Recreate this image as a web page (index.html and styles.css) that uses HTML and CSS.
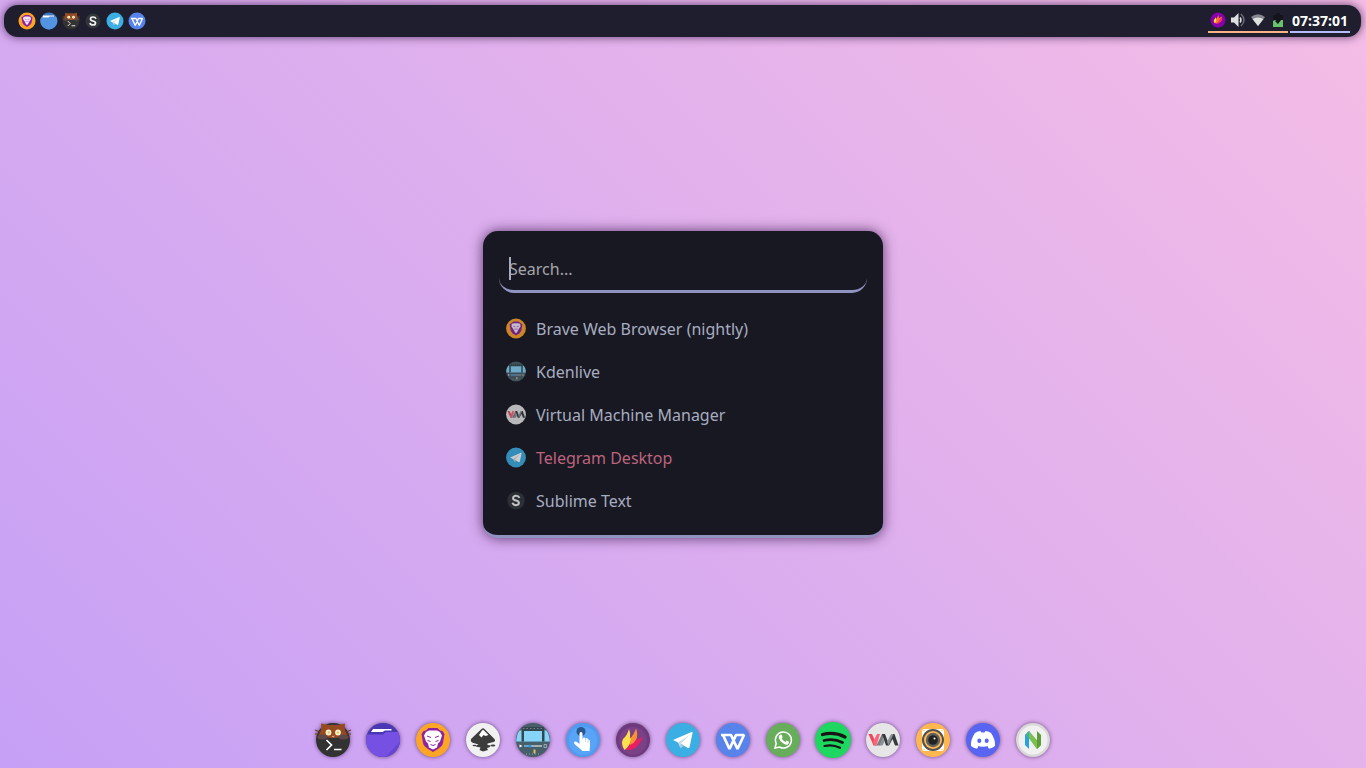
FILE: index.html
```html
<!DOCTYPE html>
<html lang="en">
<head>
<meta charset="utf-8">
<meta name="viewport" content="width=device-width, initial-scale=1">
<title>Desktop</title>
<link rel="stylesheet" href="styles.css">
</head>
<body class="desktop">
<svg class="sprite" aria-hidden="true">
  <symbol id="brave" viewBox="0 0 36 36">
    <circle cx="18" cy="18" r="17" fill="#fea526"/>
    <path d="M11 8.500 13.500 6h9L25 8.500l2.500.5 2 3-1.500 9c-.5 3-3 4.500-5 6L18 30l-5-3c-2-1.500-4.500-3-5-6L6.500 12l2-3z" fill="#8e24a0"/>
    <path d="m11 10 3-1.500h8l3 1.500 2 3.500-2 6-2 2-1 4-4 2-4-2-1-4-2-2-2-6z" fill="#fff"/>
    <path d="m12 14 4 1.500M24 14l-4 1.500M12.500 18.500l3 1M23.500 18.500l-3 1M15.500 22.500l2.500 1 2.500-1" fill="none" stroke="#8e24a0"/>
  </symbol>
  <symbol id="brave-small" viewBox="0 0 36 36">
    <circle cx="18" cy="18" r="17" fill="#fea526"/>
    <path d="m11 8 3-2h8l3 2 4 3-2 11-3 4-6 4-6-4-3-4L7 11z" fill="#8e24a0"/>
    <path d="m11 10 4-1h6l4 1 1 4-4 6-2 4-2 2-2-2-2-4-4-6z" fill="#f4e9f6"/>
    <path d="m13 14 4 1m6-1-4 1m-4 4h6" fill="none" stroke="#b876c4" stroke-width="1.500"/>
  </symbol>
  <symbol id="files" viewBox="0 0 36 36">
    <circle cx="18" cy="18" r="17" fill="#4a37b4"/>
    <path d="M2 12.500h16l3-2.500h12a17 17 0 1 1-31 2.500z" fill="#7550e3"/>
    <path d="M34.500 20a17 17 0 0 1-14 15z" fill="#6845cf"/>
    <path d="M8 7h18.500v1.500H20L17.500 10H6z" fill="#fff"/>
  </symbol>
  <symbol id="files-blue" viewBox="0 0 36 36">
    <circle cx="18" cy="18" r="17" fill="#3d75bd"/>
    <path d="M2 11h16l3-2h11a17 17 0 1 1-30 2z" fill="#5294e2"/>
    <path d="M6 7h22v2h-8l-3 2H5z" fill="#fff"/>
  </symbol>
  <symbol id="kitty" viewBox="0 0 36 36">
    <circle cx="18" cy="18" r="17" fill="#323232"/>
    <path d="M0 8l7 3M0 12h7M1 15l6-1M36 8l-7 3M36 12h-7M35 15l-6-1" stroke="#6e3a22" stroke-width="1.100"/>
    <path d="M4 13Q7 8 6 1.500L13 3h10l7-1.500Q29 8 32 13l-6 2q-8 2-16 0z" fill="#954a21"/>
    <ellipse cx="7.500" cy="15" rx="5" ry="2.500" fill="#5d4848"/>
    <ellipse cx="28.500" cy="15" rx="5" ry="2.500" fill="#5d4848"/>
    <circle cx="13.500" cy="10.500" r="2.900" fill="#f7f2cf"/>
    <circle cx="23" cy="10.500" r="2.900" fill="#f7f2cf"/>
    <circle cx="13.700" cy="10.500" r="1.200" fill="#d8ce61"/>
    <circle cx="22.800" cy="10.500" r="1.200" fill="#d8ce61"/>
    <path d="m17 14 1.200.8 1.200-.8" fill="none" stroke="#e8c4ac"/>
    <path d="m11.500 18 5 5-5 5M19 27.500h7.500" fill="none" stroke="#fff" stroke-width="1.700"/>
  </symbol>
  <symbol id="sublime" viewBox="0 0 36 36">
    <circle cx="18" cy="18" r="15" fill="#31363c"/>
    <path d="M24 13.500q-1.500-3.500-6-3.500-5 0-5 4 0 3 5 4t5 4q0 4-5 4t-6-4" fill="none" stroke="#f4f4f4" stroke-width="3.400"/>
  </symbol>
  <symbol id="telegram" viewBox="0 0 36 36">
    <circle cx="18" cy="18" r="17" fill="#3bafe3"/>
    <path d="m8 18 18.500-8q1.500-.5 1 1.200l-3 14q-.5 1.500-2 .5L12 20z" fill="#fff"/>
    <path d="m13 20.500 11.500-7.500L16 21.500l-.5 5z" fill="#cbdbe6"/>
    <path d="m16 21.500 3 2-3.500 3z" fill="#a5c7de"/>
  </symbol>
  <symbol id="wps" viewBox="0 0 36 36">
    <circle cx="18" cy="18" r="17" fill="#5783eb"/>
    <path d="M6 13h10l6.500 14L29 13h-8l-6.500 14L8 13" fill="none" stroke="#fff" stroke-width="2.700" stroke-linejoin="bevel"/>
  </symbol>
  <symbol id="inkscape" viewBox="0 0 36 36">
    <circle cx="18" cy="18" r="17" fill="#f1f1f1"/>
    <path d="M16.500 7q1.500-1.500 3 0L29.500 17q1.500 2-1 3l-6 1.500v1.500l3.500.5q-1 2-4 2.500l1 2-5 1.500-3.500-1.500 1-2.500-5-1q1-1.500 3-2L7 20.500q-2-1.500-1-3.500z" fill="#3c3c3c"/>
    <path d="m17 8.500 1-.8 1 .8 4.500 4.500-3 1-2-1-2 2.500-2.500-2.500z" fill="#fff"/>
    <ellipse cx="9.500" cy="23.500" rx="2" ry=".8" fill="#3c3c3c"/>
    <ellipse cx="28" cy="23.500" rx="2.300" ry=".9" fill="#3c3c3c"/>
  </symbol>
  <symbol id="kdenlive" viewBox="0 0 36 36">
    <circle cx="18" cy="18" r="17" fill="#475f6a"/>
    <path d="M4.500 8.500h27q3 4 3.300 11H1.200q.3-7 3.300-11z" fill="#86d5f8"/>
    <path d="M7 5h22v3.500h.5v11h-23v-11H7z" fill="#34474f"/>
    <path d="M9 9h18v10.500H9z" fill="#86d5f8"/>
    <path d="M8 6.500h21" stroke="#75868d" stroke-width="1.200" stroke-dasharray="1.500 2"/>
    <path d="m4.500 22.500 3 1.500-3 1.500zM9 23.500h18v1H9z" fill="#fff"/>
    <path d="M29 22.500h2.500v3H29z" fill="none" stroke="#aebac0" stroke-width=".8"/>
    <path d="M9 23.500h7v1H9z" fill="#3292d6"/>
    <circle cx="15" cy="24" r="1.600" fill="#3292d6"/>
    <path d="M11 32h14" stroke="#a9b6bc" stroke-width=".8" stroke-dasharray="1 2"/>
    <path d="M18.500 27.500h2v3l-1 1.500-1-1.500z" fill="#e3be59"/>
  </symbol>
  <symbol id="touch" viewBox="0 0 36 36">
    <circle cx="18" cy="18" r="17" fill="#4f9bf2"/>
    <circle cx="18" cy="18.500" r="14" fill="#5aa4f8"/>
    <circle cx="16" cy="9.500" r="4.500" fill="#29588d"/>
    <path d="M14.500 11.500q0-1.500 1.500-1.500t1.500 1.500v6l1-2q1.500-.5 2 1l1-.5q1.500 0 1.500 1.500 1.800-.3 2 1.500v5l-.5 5h-7L10 22.500q-2-2 0-3 1-.5 2.500 1l2 1.500z" fill="#fff"/>
    <path d="M20.500 16v4M23 17.500V21" stroke="#9cc8f8" stroke-width=".6"/>
  </symbol>
  <symbol id="flame" viewBox="0 0 36 36">
    <circle cx="18" cy="18" r="17" fill="#6f397e"/>
    <circle cx="18" cy="19" r="14" fill="#7a4187"/>
    <path d="M11 28q1-5 6-8l3-4 1.500 2 6-3q-1 4-4.500 8.500-4 5-12 4.500z" fill="#e91e63"/>
    <path d="M15 17q4-4 6-10.500 2 5 .5 10.500-2 4-6.500 6 1-3 0-6z" fill="#ff922e"/>
    <path d="M9.500 28q-4-6-1.500-11 4-3 6-10 1.500 3.500 1 8l1 2.500q-1 6.500-6.500 10.500z" fill="#ffe14d"/>
  </symbol>
  <symbol id="flame-tray" viewBox="0 0 36 36">
    <circle cx="18" cy="18" r="17" fill="#8800aa"/>
    <path d="m10 25-2-5 5-9 1 5 5-9 1 7 7-4-1 9-6 6-6 1z" fill="#ff7b2e"/>
    <path d="m9 18 4-5 1 7-3 5q-3-3-2-7z" fill="#ffe14d"/>
    <path d="m22 16 5-4q1 7-4 11-5 4-9 2 6-2 8-9z" fill="#fc2b67"/>
  </symbol>
  <symbol id="whatsapp" viewBox="0 0 36 36">
    <circle cx="18" cy="18" r="17" fill="#67ad5b"/>
    <path d="m10 26 1.200-4.500A8 8 0 1 1 14.500 25z" fill="none" stroke="#fff" stroke-width="1.500"/>
    <path d="M14.800 13q1-1 2 0l.8 2.300-.9 1.300q1.400 2.300 3.800 3.300l1.300-1.300 2.200 1.200q.4 1.800-1.300 2.600-2 1-5-1.300-3.200-2.500-3.900-5-.3-1.900 1-3.100z" fill="#fff"/>
  </symbol>
  <symbol id="spotify" viewBox="0 0 36 36">
    <circle cx="18" cy="18" r="18" fill="#1ed760"/>
    <path d="M7.500 12.500q12-3 22.500 2.500" fill="none" stroke="#191414" stroke-width="3.300" stroke-linecap="round"/>
    <path d="M9 18.500q10-2.500 18.500 2" fill="none" stroke="#191414" stroke-width="2.700" stroke-linecap="round"/>
    <path d="M9.500 24q8-2 15.500 1.800" fill="none" stroke="#191414" stroke-width="2.200" stroke-linecap="round"/>
  </symbol>
  <symbol id="virt" viewBox="0 0 36 36">
    <circle cx="18" cy="18" r="17" fill="#e6e6e6"/>
    <path d="M3.500 12H7l3.500 8 1 3.500H8.500z" fill="#f4435d"/>
    <path d="m12 12-4 8 1.500 3.500h2L15 12z" fill="#f9657a"/>
    <path d="M17 12h3l-5 11.500h-3.500z" fill="#777d81"/>
    <path d="M17 12h3l3 8 4-8h2.500l4 11.500h-3.500L27.500 17 24 23.500h-3L18 15z" fill="#34393c"/>
    <path d="m18 16-3.500 7.500h3l2-4zM26 12l-4 8 1.500 3.500L28.500 12z" fill="#8b9195"/>
  </symbol>
  <symbol id="speaker" viewBox="0 0 36 36">
    <circle cx="18" cy="18" r="17" fill="#ffb84f"/>
    <rect x="7" y="7" width="22" height="22" rx="2.500" fill="#fff"/>
    <circle cx="18" cy="18" r="11" fill="#505050"/>
    <circle cx="18" cy="18" r="9" fill="#ffb84f"/>
    <circle cx="18" cy="18" r="7.200" fill="#606060"/>
    <circle cx="18" cy="18" r="4.800" fill="#222"/>
    <circle cx="19.500" cy="16.500" r="1" fill="#fff"/>
    <path d="M8.500 8.500h1M26.500 8.500h1M8.500 27.500h1M26.500 27.500h1" stroke="#ffb84f"/>
  </symbol>
  <symbol id="discord" viewBox="0 0 36 36">
    <circle cx="18" cy="18" r="17" fill="#5865f2"/>
    <path d="M10 11q3-1.800 5.500-2l1 1.500h3l1-1.500q2.500.2 5.500 2 4.500 6.500 4 13-2.500 2-6 2.800l-1.500-2.300 1.200-.8q-5.700 2-11.400 0l1.200.8L12 26.800Q8.500 26 6 24q-.5-6.500 4-13z" fill="#fff"/>
    <ellipse cx="14.300" cy="18.800" rx="2" ry="2.300" fill="#5865f2"/>
    <ellipse cx="21.700" cy="18.800" rx="2" ry="2.300" fill="#5865f2"/>
  </symbol>
  <symbol id="neovim" viewBox="0 0 36 36">
    <circle cx="18" cy="18" r="17" fill="#d9d9d9"/>
    <circle cx="18" cy="18" r="14.500" fill="#f0f0f0"/>
    <path d="m10 13 4-4v18l-4-4z" fill="#29a3dc"/>
    <path d="m14 9 12 14-4 4-8-11z" fill="#76b852"/>
    <path d="m10 13 4-4 2 3v6z" fill="#48a9ae"/>
    <path d="m22 9 4 4v10l-4 4z" fill="#609b38"/>
    <path d="m14 9 8 12v6L14 16z" fill="#7ac14d"/>
  </symbol>
</svg>

<header class="bar">
  <nav class="tasks" aria-label="Open windows">
    <button class="task" aria-label="Brave"><svg><use href="#brave-small"/></svg></button>
    <button class="task" aria-label="Files"><svg><use href="#files-blue"/></svg></button>
    <button class="task" aria-label="Terminal"><svg><use href="#kitty"/></svg></button>
    <button class="task" aria-label="Sublime Text"><svg><use href="#sublime"/></svg></button>
    <button class="task" aria-label="Telegram"><svg><use href="#telegram"/></svg></button>
    <button class="task" aria-label="WPS Office"><svg><use href="#wps"/></svg></button>
  </nav>
  <div class="status">
    <div class="tray">
      <button class="tray-item" aria-label="Flameshot"><svg viewBox="0 0 16 16"><use href="#flame-tray" x="0" y="0" width="16" height="16"/></svg></button>
      <button class="tray-item" aria-label="Volume"><svg viewBox="0 0 16 16"><path d="M1 5.500h3L8.500 1v14L4 10.500H1z" fill="#dfdfdf"/><path d="M10 5.500q2 2.500 0 5" fill="none" stroke="#dfdfdf" stroke-width="1.500"/><path d="M11 2q6 6 0 12" fill="none" stroke="#6b6b77" stroke-width="1.500"/></svg></button>
      <button class="tray-item" aria-label="Wi-Fi"><svg viewBox="0 0 16 16"><path d="M1 5q7-5.500 14 0l-7 9z" fill="#858590"/><path d="M2.500 7q5.500-3 11 0L8 14z" fill="#dfdfdf"/></svg></button>
      <button class="tray-item" aria-label="Battery"><svg viewBox="0 0 16 16"><path d="M3 3h3V1h4v2h3v5H3z" fill="#14141d"/><path d="M3 9l2-1 1 1h3l2-1h2v7H3z" fill="#68c26b"/><path d="M7 5h2v3h2l-3 4-3-3h2z" fill="#14141d"/></svg></button>
    </div>
    <time class="clock" datetime="07:37:01">07:37:01</time>
  </div>
</header>

<main class="launcher">
  <label class="search">
    <input class="search-input" type="text" placeholder="Search..." aria-label="Search applications">
    <span class="caret"></span>
  </label>
  <div class="results">
    <button class="result"><svg><use href="#brave-small"/></svg>Brave Web Browser (nightly)</button>
    <button class="result"><svg><use href="#kdenlive"/></svg>Kdenlive</button>
    <button class="result"><svg><use href="#virt"/></svg>Virtual Machine Manager</button>
    <button class="result result-selected"><svg><use href="#telegram"/></svg>Telegram Desktop</button>
    <button class="result"><svg><use href="#sublime"/></svg>Sublime Text</button>
  </div>
</main>

<nav class="dock" aria-label="Dock">
  <button class="app" aria-label="Terminal"><svg><use href="#kitty"/></svg></button>
  <button class="app" aria-label="Files"><svg><use href="#files"/></svg></button>
  <button class="app" aria-label="Brave"><svg><use href="#brave"/></svg></button>
  <button class="app" aria-label="Inkscape"><svg><use href="#inkscape"/></svg></button>
  <button class="app" aria-label="Kdenlive"><svg><use href="#kdenlive"/></svg></button>
  <button class="app" aria-label="Touch"><svg><use href="#touch"/></svg></button>
  <button class="app" aria-label="Flameshot"><svg><use href="#flame"/></svg></button>
  <button class="app" aria-label="Telegram"><svg><use href="#telegram"/></svg></button>
  <button class="app" aria-label="WPS Office"><svg><use href="#wps"/></svg></button>
  <button class="app" aria-label="WhatsApp"><svg><use href="#whatsapp"/></svg></button>
  <button class="app" aria-label="Spotify"><svg><use href="#spotify"/></svg></button>
  <button class="app" aria-label="Virtual Machine Manager"><svg><use href="#virt"/></svg></button>
  <button class="app" aria-label="Audio"><svg><use href="#speaker"/></svg></button>
  <button class="app" aria-label="Discord"><svg><use href="#discord"/></svg></button>
  <button class="app" aria-label="Neovim"><svg><use href="#neovim"/></svg></button>
</nav>
</body>
</html>
```
FILE: styles.css
```css
* {
  box-sizing: border-box;
}

.desktop {
  display: grid;
  grid-template-rows: 1fr auto 1fr;
  justify-items: center;
  min-height: 100vh;
  margin: 0;
  background: linear-gradient(45deg, #c6a0f6, #f5bde6);
  font-family: "Noto Sans", sans-serif;
  font-size: 16px;
}

.sprite {
  position: absolute;
  width: 0;
  height: 0;
}

button {
  padding: 0;
  border: 0;
  background: none;
  color: inherit;
  font: inherit;
  cursor: pointer;
}

button svg {
  display: block;
  flex: none;
}

/* Top bar */
.bar {
  display: flex;
  justify-content: space-between;
  align-self: start;
  justify-self: stretch;
  height: 32px;
  margin: 5px 5px 0 4px;
  padding: 0 11px 0 14px;
  border-radius: 14px;
  background: #1e1e2e;
  box-shadow: 0 0 10px #3c1e50d0;
}

.tasks {
  display: flex;
  align-items: center;
  gap: 4px;
}

.task svg {
  width: 18px;
  height: 18px;
}

.status {
  display: flex;
  align-items: flex-start;
  gap: 2px;
}

.tray,
.clock {
  display: flex;
  align-items: center;
  height: 28px;
  padding-top: 4px;
  border-bottom: 2px solid;
}

.tray {
  gap: 4px;
  padding: 4px 2px 0;
  border-color: #fab387;
}

.tray-item svg {
  width: 16px;
  height: 16px;
}

.clock {
  justify-content: center;
  width: 60px;
  border-color: #b4befe;
  color: #fff;
  font-size: 14px;
  font-weight: 700;
}

/* Launcher */
.launcher {
  width: 400px;
  padding: 16px 16px 12px;
  border-bottom: 3px solid #9092bf;
  border-radius: 15px;
  background: #181822;
  box-shadow: 0 0 13px #3c1e50d0;
  color: #a7adc0;
}

.search {
  display: block;
  position: relative;
}

.search-input {
  display: block;
  width: 100%;
  height: 46px;
  padding: 2px 10px 0;
  border: 0;
  border-bottom: 3px solid #9092bf;
  border-radius: 15px;
  outline: 0;
  background: transparent;
  color: inherit;
  font: inherit;
}

.search-input::placeholder {
  color: #a5a5ab;
  opacity: 1;
}

.caret {
  position: absolute;
  top: 10px;
  left: 10px;
  width: 2px;
  height: 23px;
  background: #a7adc0;
}

.results {
  display: flex;
  flex-direction: column;
  padding-top: 15px;
}

.result {
  display: flex;
  align-items: center;
  gap: 9px;
  height: 43px;
  padding: 0 6px;
  text-align: left;
}

.result svg {
  width: 22px;
  height: 22px;
  padding-bottom: 1px;
  opacity: 0.78;
}

.result-selected {
  color: #bd647d;
}

/* Dock */
.dock {
  display: flex;
  align-self: end;
  gap: 14px;
  padding-bottom: 10px;
}

.app svg {
  width: 36px;
  height: 36px;
  overflow: visible;
  filter: drop-shadow(0 0 2px #3c1e50b0);
}
```
